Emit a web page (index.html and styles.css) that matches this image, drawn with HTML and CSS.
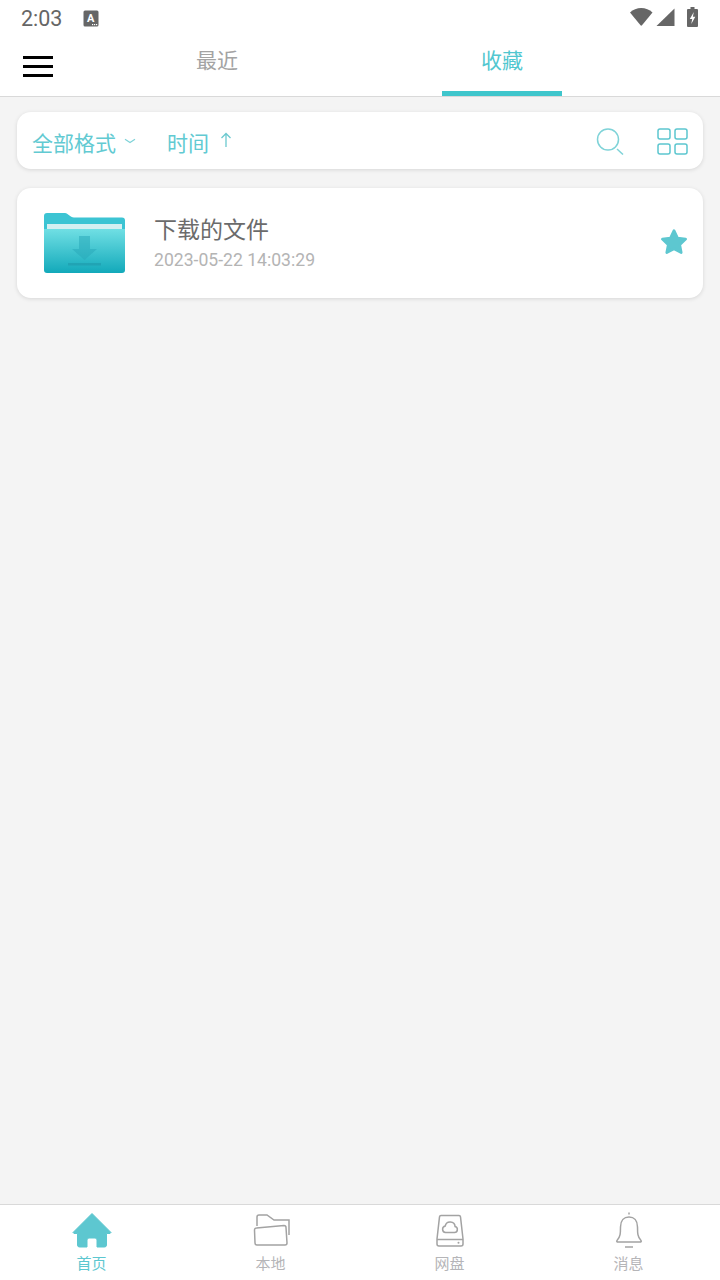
FILE: index.html
```html
<!DOCTYPE html>
<html lang="zh-CN">
<head>
    <meta charset="UTF-8">
    <meta name="viewport" content="width=device-width, initial-scale=1.0">
    <title>收藏</title>
    <link rel="stylesheet" href="styles.css">
</head>
<body>
    <div class="app">
        <div class="status-bar">
            <span class="clock">2:03</span>
            <svg class="status-a" width="16" height="16" viewBox="0 0 16 16">
                <rect x="0.5" y="0.5" width="15" height="16" rx="1.5" fill="#666"/>
                <text x="7.6" y="12" text-anchor="middle" class="status-a-text">A</text>
                <rect x="9" y="14" width="1.2" height="1.2" fill="#fff"/>
                <rect x="11" y="14" width="1.2" height="1.2" fill="#fff"/>
                <rect x="13" y="14" width="1.2" height="1.2" fill="#fff"/>
            </svg>
            <div class="status-right">
                <svg class="status-wifi" width="23" height="20" viewBox="0 0 23 20"><path d="M0 5.500C3 2.600 7 1 11.200 1S19.500 2.600 22.500 5.500L12 18.200a1 1 0 0 1-1.500 0z" fill="#666"/></svg>
                <svg class="status-signal" width="19" height="20" viewBox="0 0 19 20"><path d="M18.500 1.500V19H0.500z" fill="#666"/></svg>
                <svg class="status-battery" width="11" height="20" viewBox="0 0 11 20"><path d="M3.500 0h4v2h2.500a1 1 0 0 1 1 1v16a1 1 0 0 1-1 1H1a1 1 0 0 1-1-1V3a1 1 0 0 1 1-1h2.500z" fill="#666"/><path d="M6.800 5L2.800 12H5.200L4.300 17L8.300 9.800H5.900z" fill="#fff"/></svg>
            </div>
        </div>

        <div class="top-bar">
            <div class="menu-btn"><span></span><span></span><span></span></div>
            <div class="tabs">
                <div class="tab">最近</div>
                <div class="tab tab-active">收藏</div>
            </div>
        </div>

        <main class="content">
            <div class="filter-bar">
                <span class="filter-label">全部格式</span>
                <svg class="filter-chevron" width="12" height="6" viewBox="0 0 12 6"><path d="M1 1.200L6 4.500L11 1.200" fill="none" stroke="#7fd3d8" stroke-width="1.200"/></svg>
                <span class="filter-label filter-time">时间</span>
                <svg class="filter-arrow" width="12" height="16" viewBox="0 0 12 16"><path d="M6 15V1.500M1.500 6L6 1.500L10.500 6" fill="none" stroke="#6cc9cf" stroke-width="1.300"/></svg>
                <svg class="search-icon" width="28" height="27" viewBox="0 0 28 27"><circle cx="12" cy="11.500" r="10.500" fill="none" stroke="#7fd3d8" stroke-width="1.500"/><path d="M21 21L27 26.500" stroke="#7fd3d8" stroke-width="1.500"/></svg>
                <svg class="grid-icon" width="31" height="27" viewBox="0 0 31 27">
                    <rect x="1" y="1" width="12" height="10" rx="2" fill="none" stroke="#5cc6cf" stroke-width="1.500"/>
                    <rect x="18" y="1" width="12" height="10" rx="2" fill="none" stroke="#5cc6cf" stroke-width="1.500"/>
                    <rect x="1" y="16" width="12" height="10" rx="2" fill="none" stroke="#5cc6cf" stroke-width="1.500"/>
                    <rect x="18" y="16" width="12" height="10" rx="2" fill="none" stroke="#5cc6cf" stroke-width="1.500"/>
                </svg>
            </div>

            <div class="file-card">
                <svg class="folder" width="81" height="60" viewBox="0 0 81 60">
                    <defs>
                        <linearGradient id="folderFront" x1="0" y1="0" x2="0" y2="1">
                            <stop offset="0" stop-color="#70dfe4"/>
                            <stop offset="1" stop-color="#12a9ba"/>
                        </linearGradient>
                    </defs>
                    <path d="M0 3a3 3 0 0 1 3-3h18c3 0 5 4.500 9 4.500h48a3 3 0 0 1 3 3V22H0z" fill="#3cc4d3"/>
                    <rect x="3" y="11" width="75" height="6" fill="#d5eff1"/>
                    <path d="M0 16h81v41a3 3 0 0 1-3 3H3a3 3 0 0 1-3-3z" fill="url(#folderFront)"/>
                    <path d="M35 23h11v13h7L40.500 47L28 36h7z" fill="#2aa9ba" fill-opacity="0.55"/>
                    <rect x="24" y="50" width="33" height="2.500" fill="#1f9dae" fill-opacity="0.7"/>
                </svg>
                <div class="file-info">
                    <div class="file-name">下载的文件</div>
                    <div class="file-date">2023-05-22 14:03:29</div>
                </div>
                <svg class="star" width="28" height="28" viewBox="0 0 26 26"><path d="M13 2.500L16.300 9.300L23.800 10.300L18.300 15.500L19.700 22.800L13 19.300L6.300 22.800L7.700 15.500L2.200 10.300L9.700 9.300z" fill="#5dc7d0" stroke="#5dc7d0" stroke-width="2.500" stroke-linejoin="round"/></svg>
            </div>
        </main>

        <nav class="bottom-nav">
            <div class="nav-item nav-active">
                <svg width="40" height="36" viewBox="0 0 40 36"><path d="M20 1.500L39 20.500L38 21.500H34.500V33a2 2 0 0 1-2 2H25V28a2 2 0 0 0-2-2H17a2 2 0 0 0-2 2v7H7.500a2 2 0 0 1-2-2V21.500H2L1 20.500z" fill="#5dc7d0" stroke="#5dc7d0" stroke-linejoin="round"/></svg>
                <span>首页</span>
            </div>
            <div class="nav-item">
                <svg width="38" height="36" viewBox="0 0 38 36" fill="none" stroke="#a3a3a3" stroke-width="1.500"><path d="M5 14V5a2 2 0 0 1 2-2h8l7 5h15v15"/><path d="M2.500 18a2 2 0 0 1 2-2L32 13.500a2 2 0 0 1 2 2L35 31a2 2 0 0 1-2 2H5a2 2 0 0 1-2-2z"/></svg>
                <span>本地</span>
            </div>
            <div class="nav-item">
                <svg width="30" height="36" viewBox="0 0 30 36" fill="none" stroke="#a3a3a3" stroke-width="1.500"><path d="M6 3.500H24a1.500 1.500 0 0 1 1.500 1.300L28 27v5a2 2 0 0 1-2 2H4a2 2 0 0 1-2-2v-5L4.500 4.800A1.500 1.500 0 0 1 6 3.500z"/><path d="M2 27.500H28"/><path d="M10.500 20.500h9a3 3 0 0 0 .6-5.900a5 5 0 0 0-9.900-.6a3.300 3.300 0 0 0 .3 6.500z"/><circle cx="23.500" cy="30.800" r="1" fill="#a3a3a3" stroke="none"/></svg>
                <span>网盘</span>
            </div>
            <div class="nav-item">
                <svg width="30" height="36" viewBox="0 0 30 36" fill="none" stroke="#a3a3a3" stroke-width="1.500"><path d="M15 0.500v2"/><path d="M3 28.500C6.500 25 6.500 21 6.500 15C6.500 8.500 10 5 15 5s8.500 3.500 8.500 10c0 6 0 10 3.500 13.500c.8 1-.2 1.500-1 1.500H4c-.8 0-1.800-.5-1-1.500z"/><path d="M11 35h8"/></svg>
                <span>消息</span>
            </div>
        </nav>
    </div>
</body>
</html>
```

FILE: styles.css
```css
* { box-sizing: border-box; }
body {
    margin: 0;
    font-family: Roboto, "Noto Sans CJK SC", sans-serif;
    background-color: #f4f4f4;
}
svg { display: block; flex-shrink: 0; }
.app {
    width: 720px;
    height: 1280px;
    display: flex;
    flex-direction: column;
    overflow: hidden;
}

.status-bar {
    height: 37px;
    background: #fff;
    display: flex;
    align-items: center;
    padding: 0 22px 0 21px;
}
.clock { font-size: 21.5px; color: #666; width: 62px; }
.status-a { overflow: visible; margin-top: -1px; }
.status-a-text { font-family: Roboto, sans-serif; font-size: 11px; font-weight: 700; fill: #fff; }
.status-right { margin-left: auto; margin-top: -3px; display: flex; align-items: center; }
.status-signal { margin-left: 3px; }
.status-battery { margin-left: 12px; }

.top-bar {
    height: 60px;
    background: #fff;
    border-bottom: 1px solid #d9d9d9;
    display: flex;
}
.menu-btn {
    width: 30px;
    margin: 19px 0 0 23px;
    display: flex;
    flex-direction: column;
    gap: 6px;
}
.menu-btn span { display: block; height: 3px; background: #000; }
.tabs { display: flex; margin-left: 104px; gap: 165px; }
.tab {
    width: 120px;
    height: 59px;
    text-align: center;
    font-size: 21px;
    line-height: 48px;
    color: #a3a3a3;
}
.tab-active { color: #52c7d0; border-bottom: 5px solid #3fc6cc; }

.content {
    flex: 1;
    padding: 15px 17px 0;
    display: flex;
    flex-direction: column;
    gap: 19px;
}
.filter-bar {
    height: 57px;
    background: #fff;
    border-radius: 14px;
    box-shadow: 0 1px 4px rgba(0, 0, 0, 0.12);
    display: flex;
    align-items: center;
    padding: 0 15px;
}
.filter-label { font-size: 21px; color: #62cad2; line-height: 51px; margin-top: 8px; }
.filter-chevron { margin: 0 0 0 8px; }
.filter-time { margin-left: 31px; }
.filter-arrow { margin: -2px 0 0 11px; }
.search-icon { margin-left: auto; margin-top: 1px; }
.grid-icon { margin-left: 33px; margin-top: 1px; }

.file-card {
    height: 110px;
    background: #fff;
    border-radius: 14px;
    box-shadow: 0 1px 4px rgba(0, 0, 0, 0.12);
    display: flex;
    align-items: center;
    padding: 0 15px 0 27px;
}
.folder { margin-top: -1px; overflow: visible; }
.file-info { margin-left: 29px; flex: 1; }
.file-name { font-size: 23px; color: #6b6b6b; line-height: 32px; }
.file-date { font-size: 17.6px; color: #b4b4b4; line-height: 22px; margin-top: 2px; }
.star { margin-top: -2px; }

.bottom-nav {
    height: 76px;
    background: #fff;
    border-top: 1px solid #d9d9d9;
    display: grid;
    grid-template-columns: repeat(4, 1fr);
    padding: 0 2px;
}
.nav-item {
    display: flex;
    flex-direction: column;
    align-items: center;
    padding-top: 7px;
    font-size: 15px;
    color: #b5b5b8;
}
.nav-item span { line-height: 20px; margin-top: 6px; }
.nav-active { color: #5dc7d0; }
```
